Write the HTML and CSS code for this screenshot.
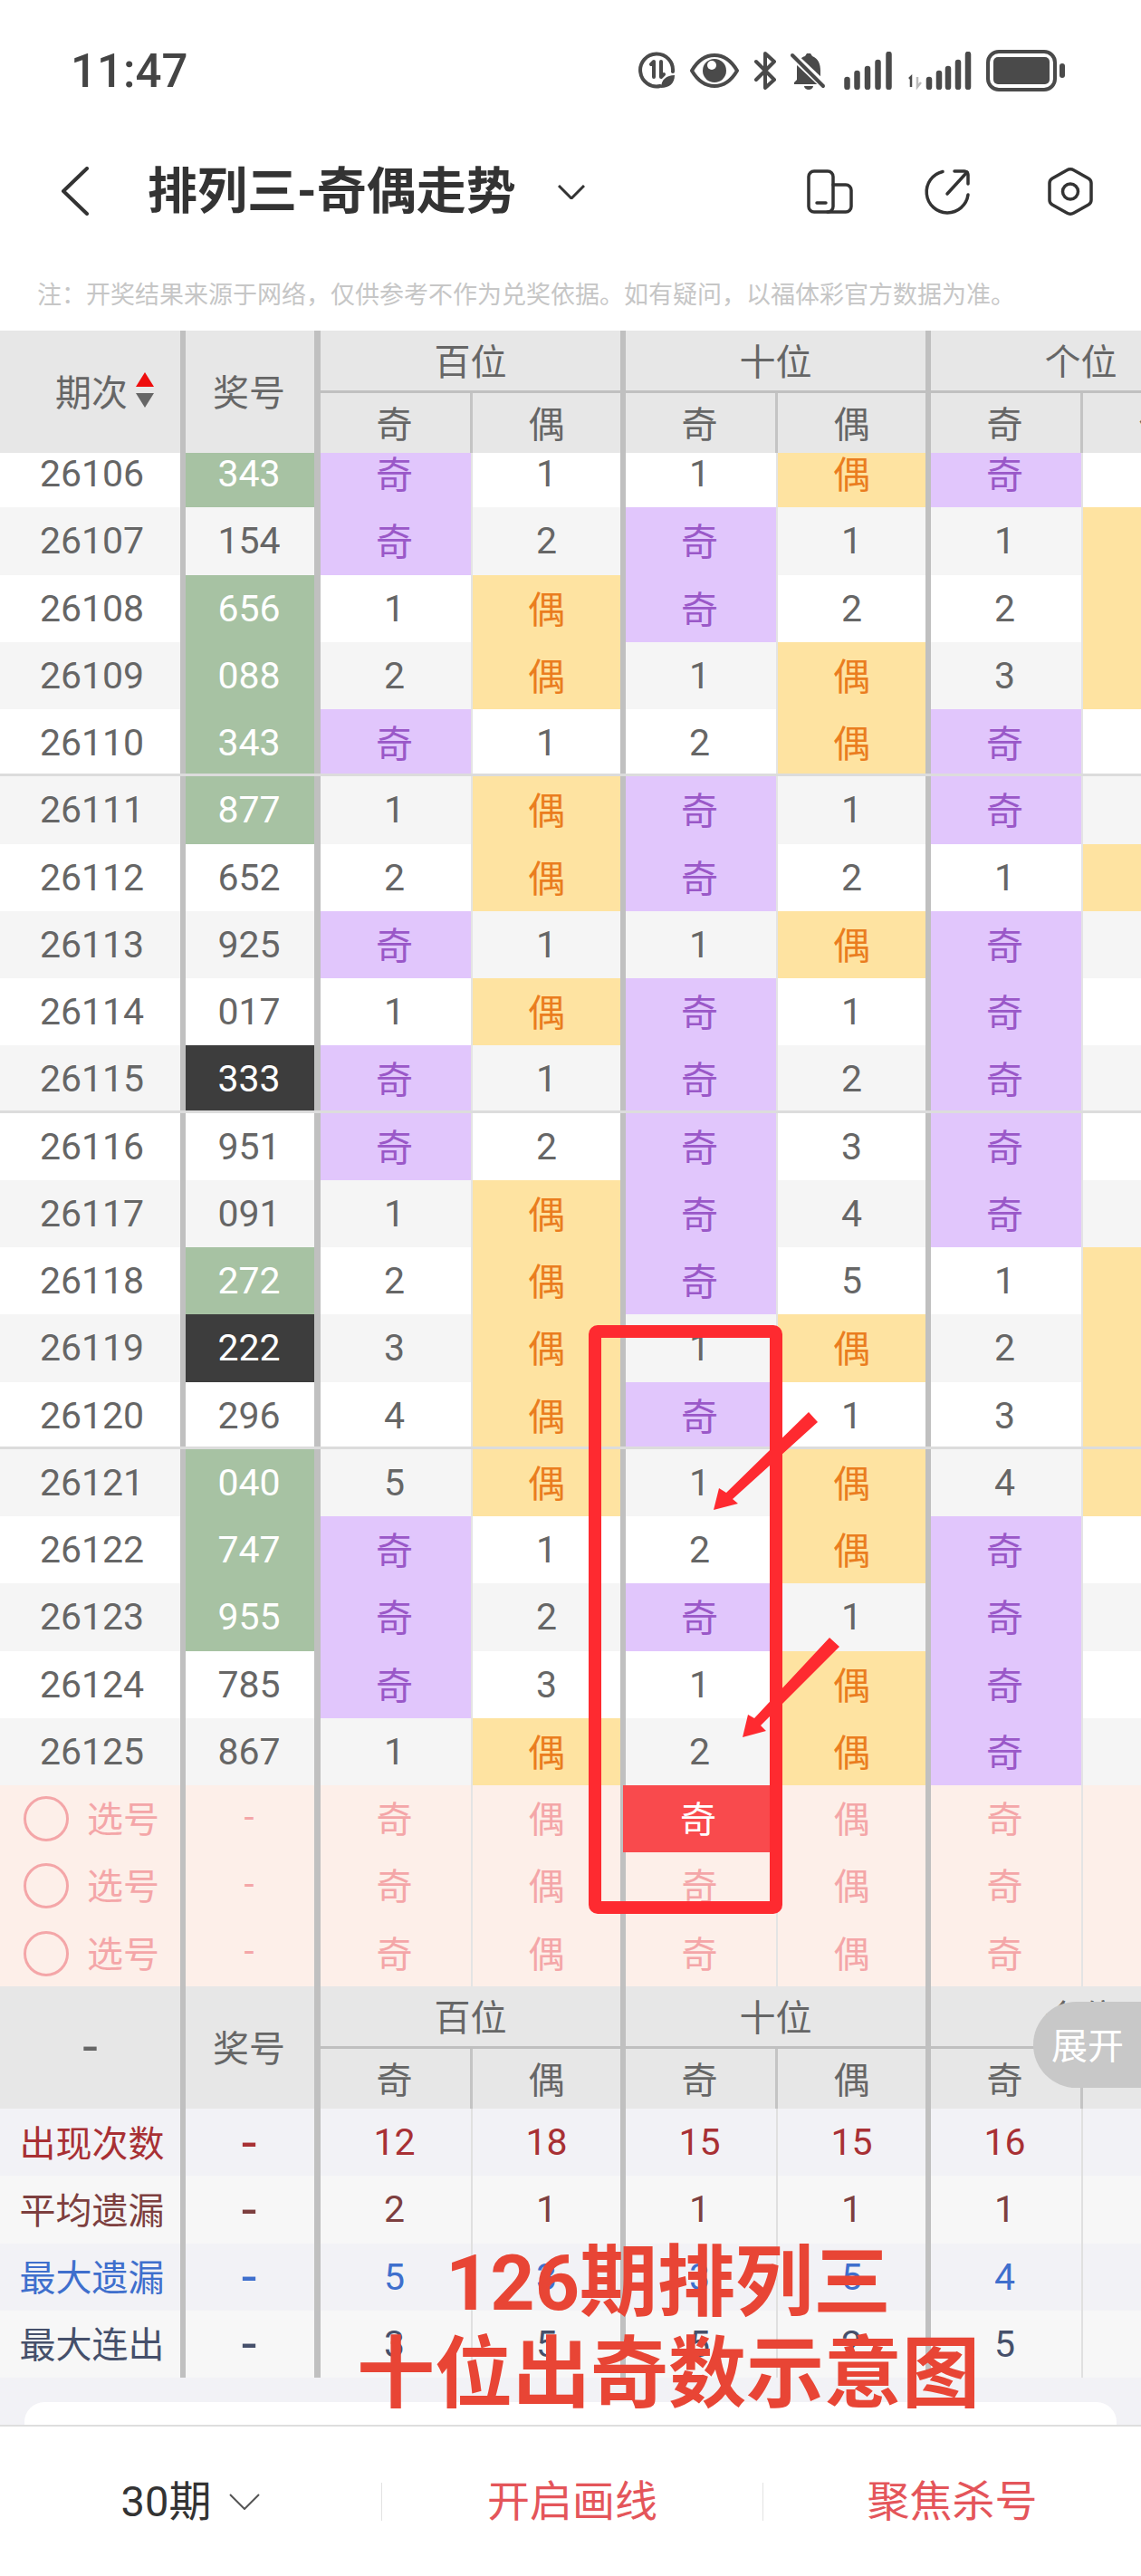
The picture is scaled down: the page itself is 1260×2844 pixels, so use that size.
FILE: index.html
```html
<!DOCTYPE html>
<html lang="zh">
<head>
<meta charset="utf-8">
<title>排列三-奇偶走势</title>
<link rel="stylesheet" href="styles.css">
</head>
<body>
<div class="page">
  <div class="status">
    <span class="time">11:47</span>
    <div class="status-icons">
      <svg width="41" height="42" viewBox="0 0 41 42"><path class="ln" d="M24 38A18 18 0 1 1 38 22"/><path class="ln" d="M14 14l3-3v17M25 11v17l3-3"/><path class="fl" d="M25 40c0-9 6-14 15-14 0 9-6 14-15 14z"/></svg>
      <svg width="54" height="42" viewBox="0 0 54 42"><path class="ln" d="M2 21C9 9 18 4 27 4s18 5 25 17c-7 12-16 17-25 17S9 33 2 21z"/><circle class="fl" cx="27" cy="21" r="13"/><circle class="wh" cx="24" cy="15" r="5"/></svg>
      <svg width="26" height="42" viewBox="0 0 26 42"><path class="ln" d="M3 11l20 20-10 9V2l10 9L3 31"/></svg>
      <svg class="bell" width="44" height="42" viewBox="0 0 44 42"><path class="fl" d="M19 2h4l2 3c7 3 9 9 9 16v10l3 3v2H5v-2l3-3V17c0-6 3-10 9-12z"/><path class="fl" d="M16 38h10a5 4 0 0 1-10 0z"/><path class="slash" d="M3 4l38 36"/><path class="slash-b" d="M3 4l34 34"/></svg>
      <svg width="53" height="42" viewBox="0 0 53 42"><g class="bar"><path d="M3.500 31v8"/><path d="M14.500 24v15"/><path d="M26 19v20"/><path d="M37.500 12v27"/><path d="M49.500 3v36"/></g></svg>
      <svg width="72" height="42" viewBox="0 0 72 42"><path class="tiny" d="M3 30l2-2v11"/><path class="tiny-g" d="M12 28v11l4-5"/><g class="bar"><path d="M25 31v8"/><path d="M36 24v15"/><path d="M46 19v20"/><path d="M57 12v27"/><path d="M68 3v36"/></g></svg>
      <svg width="87" height="46" viewBox="0 0 87 46"><rect class="ln" x="2" y="2" width="74" height="42" rx="12"/><rect class="fl" x="8" y="8" width="62" height="30" rx="5"/><rect class="fl" x="81" y="15" width="6" height="16" rx="3"/></svg>
    </div>
  </div>

  <div class="nav">
    <svg class="back" width="31" height="54" viewBox="0 0 31 54"><path d="M29 2L3 27l26 25"/></svg>
    <h1 class="title">排列三-奇偶走势</h1>
    <svg class="title-caret" width="30" height="16" viewBox="0 0 30 16"><path d="M1 1l14 14L29 1"/></svg>
    <svg class="nav-icon nav-device" width="51" height="49" viewBox="0 0 51 49"><path d="M23 2H8a6 6 0 0 0-6 6v33a6 6 0 0 0 6 6h15a6 6 0 0 0 6-6V8a6 6 0 0 0-6-6z"/><path d="M29 17h14a6 6 0 0 1 6 6v18a6 6 0 0 1-6 6H23"/><path d="M11 37h10"/></svg>
    <svg class="nav-icon nav-share" width="51" height="51" viewBox="0 0 51 51"><path d="M21 3.500A23 23 0 1 0 49 29"/><path d="M34 3h11a4 4 0 0 1 4 4v10"/><path d="M48 4L26 28"/></svg>
    <svg class="nav-icon nav-hex" width="50" height="53" viewBox="0 0 50 53"><path d="M21 3L5 12a6 6 0 0 0-3 5v19a6 6 0 0 0 3 5l16 9a8 8 0 0 0 8 0l16-9a6 6 0 0 0 3-5V17a6 6 0 0 0-3-5L29 3a8 8 0 0 0-8 0z"/><circle cx="25" cy="26.500" r="8.500"/></svg>
  </div>

  <p class="note">注：开奖结果来源于网络，仅供参考不作为兑奖依据。如有疑问，以福体彩官方数据为准。</p>

  <div class="thead">
    <div class="th th-no th-sort">期次<span class="sort"><i class="up"></i><i class="down"></i></span></div>
    <div class="th th-prize">奖号</div>
    <div class="th grp">百位</div><div class="th grp">十位</div><div class="th grp">个位</div>
    <div class="th sub">奇</div><div class="th sub sub-e">偶</div>
    <div class="th sub">奇</div><div class="th sub sub-e">偶</div>
    <div class="th sub">奇</div><div class="th sub sub-e">偶</div>
  </div>

  <div class="tbody">
    <div class="rows">
      <div class="row"><span>26106</span><span class="g">343</span><span class="o">奇</span><span>1</span><span>1</span><span class="e">偶</span><span class="o">奇</span><span>1</span></div>
      <div class="row"><span>26107</span><span>154</span><span class="o">奇</span><span>2</span><span class="o">奇</span><span>1</span><span>1</span><span class="e">偶</span></div>
      <div class="row"><span>26108</span><span class="g">656</span><span>1</span><span class="e">偶</span><span class="o">奇</span><span>2</span><span>2</span><span class="e">偶</span></div>
      <div class="row"><span>26109</span><span class="g">088</span><span>2</span><span class="e">偶</span><span>1</span><span class="e">偶</span><span>3</span><span class="e">偶</span></div>
      <div class="row line"><span>26110</span><span class="g">343</span><span class="o">奇</span><span>1</span><span>2</span><span class="e">偶</span><span class="o">奇</span><span>1</span></div>
      <div class="row"><span>26111</span><span class="g">877</span><span>1</span><span class="e">偶</span><span class="o">奇</span><span>1</span><span class="o">奇</span><span>2</span></div>
      <div class="row"><span>26112</span><span>652</span><span>2</span><span class="e">偶</span><span class="o">奇</span><span>2</span><span>1</span><span class="e">偶</span></div>
      <div class="row"><span>26113</span><span>925</span><span class="o">奇</span><span>1</span><span>1</span><span class="e">偶</span><span class="o">奇</span><span>1</span></div>
      <div class="row"><span>26114</span><span>017</span><span>1</span><span class="e">偶</span><span class="o">奇</span><span>1</span><span class="o">奇</span><span>2</span></div>
      <div class="row line"><span>26115</span><span class="k">333</span><span class="o">奇</span><span>1</span><span class="o">奇</span><span>2</span><span class="o">奇</span><span>3</span></div>
      <div class="row"><span>26116</span><span>951</span><span class="o">奇</span><span>2</span><span class="o">奇</span><span>3</span><span class="o">奇</span><span>4</span></div>
      <div class="row"><span>26117</span><span>091</span><span>1</span><span class="e">偶</span><span class="o">奇</span><span>4</span><span class="o">奇</span><span>5</span></div>
      <div class="row"><span>26118</span><span class="g">272</span><span>2</span><span class="e">偶</span><span class="o">奇</span><span>5</span><span>1</span><span class="e">偶</span></div>
      <div class="row"><span>26119</span><span class="k">222</span><span>3</span><span class="e">偶</span><span>1</span><span class="e">偶</span><span>2</span><span class="e">偶</span></div>
      <div class="row line"><span>26120</span><span>296</span><span>4</span><span class="e">偶</span><span class="o">奇</span><span>1</span><span>3</span><span class="e">偶</span></div>
      <div class="row"><span>26121</span><span class="g">040</span><span>5</span><span class="e">偶</span><span>1</span><span class="e">偶</span><span>4</span><span class="e">偶</span></div>
      <div class="row"><span>26122</span><span class="g">747</span><span class="o">奇</span><span>1</span><span>2</span><span class="e">偶</span><span class="o">奇</span><span>1</span></div>
      <div class="row"><span>26123</span><span class="g">955</span><span class="o">奇</span><span>2</span><span class="o">奇</span><span>1</span><span class="o">奇</span><span>2</span></div>
      <div class="row"><span>26124</span><span>785</span><span class="o">奇</span><span>3</span><span>1</span><span class="e">偶</span><span class="o">奇</span><span>3</span></div>
      <div class="row"><span>26125</span><span>867</span><span>1</span><span class="e">偶</span><span>2</span><span class="e">偶</span><span class="o">奇</span><span>4</span></div>
      <div class="row pick"><span><i class="radio"></i>选号</span><span class="d">-</span><span>奇</span><span>偶</span><span class="picked">奇</span><span>偶</span><span>奇</span><span>偶</span></div>
      <div class="row pick"><span><i class="radio"></i>选号</span><span class="d">-</span><span>奇</span><span>偶</span><span>奇</span><span>偶</span><span>奇</span><span>偶</span></div>
      <div class="row pick"><span><i class="radio"></i>选号</span><span class="d">-</span><span>奇</span><span>偶</span><span>奇</span><span>偶</span><span>奇</span><span>偶</span></div>
    </div>
  </div>

  <div class="thead">
    <div class="th th-no th-dash">-</div>
    <div class="th th-prize">奖号</div>
    <div class="th grp">百位</div><div class="th grp">十位</div><div class="th grp">个位</div>
    <div class="th sub">奇</div><div class="th sub sub-e">偶</div>
    <div class="th sub">奇</div><div class="th sub sub-e">偶</div>
    <div class="th sub">奇</div><div class="th sub sub-e">偶</div>
  </div>

  <div class="stats">
    <div class="row s-count"><span>出现次数</span><span class="d">-</span><span>12</span><span>18</span><span>15</span><span>15</span><span>16</span><span>14</span></div>
    <div class="row s-avg"><span>平均遗漏</span><span class="d">-</span><span>2</span><span>1</span><span>1</span><span>1</span><span>1</span><span>1</span></div>
    <div class="row s-max"><span>最大遗漏</span><span class="d">-</span><span>5</span><span>3</span><span>3</span><span>5</span><span>4</span><span>5</span></div>
    <div class="row s-run"><span>最大连出</span><span class="d">-</span><span>3</span><span>5</span><span>5</span><span>2</span><span>5</span><span>3</span></div>
  </div>

  <div class="foot-gap"><div class="foot-card"></div></div>

  <div class="bottom">
    <div class="bottom-cell bottom-period">30期<svg width="34" height="18" viewBox="0 0 34 18"><path d="M1 1l16 16L33 1"/></svg></div>
    <div class="bottom-cell bottom-red">开启画线</div>
    <div class="bottom-cell bottom-red">聚焦杀号</div>
  </div>

  <div class="expand">展开</div>

  <svg class="annot" width="1260" height="2844" viewBox="0 0 1260 2844">
    <rect class="annot-box" x="657" y="1470" width="200" height="636" rx="3"/>
    <polygon class="annot-arrow" points="893,1559 903,1570 809,1655 815,1660 788,1667 794,1643 802,1648"/>
    <polygon class="annot-arrow" points="916,1808 927,1818 840,1905 846,1911 820,1918 826,1893 833,1897"/>
  </svg>
  <div class="caption">126期排列三<br>十位出奇数示意图</div>
</div>
</body>
</html>
```
FILE: styles.css
```css
* { box-sizing: border-box; }
html, body { margin: 0; padding: 0; background: #fff; }
body { font-family: Roboto, "Noto Sans CJK SC", sans-serif; color: #666; }
.page { position: relative; width: 1260px; height: 2844px; overflow: hidden; display: flex; flex-direction: column; background: #fff; }

/* status bar */
.status { height: 156px; flex: none; display: flex; align-items: center; padding: 0 84px 0 78px; }
.time { font-size: 51px; font-weight: 500; color: #444; line-height: 1; }
.status-icons { margin-left: auto; display: flex; align-items: center; gap: 16px; }
.status-icons .bell { margin-left: -2px; }
.ln { fill: none; stroke: #4a4a4a; stroke-width: 4; stroke-linecap: round; stroke-linejoin: round; }
.fl { fill: #4a4a4a; }
.wh { fill: #fff; }
.slash { stroke: #fff; stroke-width: 9; fill: none; }
.slash-b { stroke: #4a4a4a; stroke-width: 4; stroke-linecap: round; fill: none; }
.bar path { stroke: #4a4a4a; stroke-width: 6.500; stroke-linecap: round; fill: none; }
.tiny { stroke: #4a4a4a; stroke-width: 2.500; fill: none; }
.tiny-g { stroke: #bbb; stroke-width: 2.500; fill: none; }

/* nav */
.nav { height: 110px; flex: none; display: flex; align-items: center; padding: 0 53px 0 67px; }
.back path { fill: none; stroke: #333; stroke-width: 4; stroke-linecap: round; stroke-linejoin: round; }
.title { margin: 0 0 0 65px; font-size: 55px; line-height: 1; font-weight: 700; color: #333; white-space: nowrap; }
.title-caret { margin-left: 46px; margin-top: 2px; }
.title-caret path { fill: none; stroke: #333; stroke-width: 3; }
.nav-icon path, .nav-icon circle { fill: none; stroke: #333; stroke-width: 3.500; stroke-linecap: round; stroke-linejoin: round; }
.nav-device { margin-left: auto; }
.nav-share { margin-left: 78px; }
.nav-hex { margin-left: 86px; }

.note { height: 99px; flex: none; margin: 0; padding: 40px 0 0 41px; font-size: 27px; line-height: 40px; color: #c6c6c6; white-space: nowrap; }

/* table */
.thead, .row { display: grid; grid-template-columns: 205px 149px 168px 169px 168px 169px 168px 169px; width: 1365px; }
.thead { flex: none; height: 135px; grid-template-rows: 69px 66px; background: #e7e7e7; }
.th { display: flex; align-items: center; justify-content: center; font-size: 40px; color: #666; padding-bottom: 2px; }
.th-no { grid-row: 1 / 3; border-right: 6px solid #c0c0c0; }
.th-sort { padding-left: 32px; padding-bottom: 4px; }
.th-dash { font-size: 60px; }
.th-prize { grid-row: 1 / 3; border-right: 7px solid #c0c0c0; padding-bottom: 4px; padding-right: 2px; }
.grp { grid-column: span 2; border-right: 6px solid #c0c0c0; border-bottom: 3px solid #c0c0c0; }
.sub { border-right: 3px solid #c4c4c4; padding-right: 2px; }
.sub-e { border-right: 6px solid #c0c0c0; padding-right: 0; }
.sort { display: flex; flex-direction: column; gap: 7px; margin-left: 9px; }
.up { width: 0; height: 0; border: 10px solid transparent; border-top: 0; border-bottom: 16px solid #ee0d0d; }
.down { width: 0; height: 0; border: 10px solid transparent; border-bottom: 0; border-top: 16px solid #666; }

.tbody { flex: none; height: 1693px; overflow: hidden; }
.rows { margin-top: -14px; }
.row { height: 74.260px; background: #fff; }
.rows .row:nth-child(even) { background: #f5f5f5; }
.row > span { display: flex; align-items: center; justify-content: center; font-size: 41px; color: #666; }
.row > span:nth-child(1) { border-right: 6px solid #c0c0c0; padding-left: 4px; }
.row > span:nth-child(2) { border-right: 7px solid #c0c0c0; padding-right: 2px; }
.row > span:nth-child(2n+3) { border-right: 2px solid #e4e4e4; padding-right: 3px; }
.row > span:nth-child(2n+4) { border-right: 6px solid #c0c0c0; }
.row > span:nth-child(8) { border-right: 0; }
.row.line { border-bottom: 3px solid #dcdcdc; }
.row.line > span { padding-top: 3px; }
.row > .o { background: #e1c6fc; color: #9a58c8; background-clip: padding-box; padding-bottom: 4px; }
.row > .e { background: #fee3a1; color: #ea7d1f; background-clip: padding-box; padding-bottom: 4px; }
.row > .g { background: #a7c2a3; color: #fff; background-clip: padding-box; }
.row > .k { background: #3d3d3d; color: #fff; background-clip: padding-box; }
.rows .row.pick { background: #fdefe9; }
.row.pick > span { color: #f4a6a8; font-size: 40px; padding-bottom: 4px; }
.row.pick > span:first-child { justify-content: flex-start; padding-left: 26px; gap: 20px; }
.radio { width: 50px; height: 50px; border: 3px solid #f4a6a8; border-radius: 50%; margin-top: 4px; }
.row.pick > .picked { background: #f94a4d; color: #fff; margin-left: -3px; background-clip: padding-box; }
.row > .d, .stats .row > .d { font-size: 60px; padding-bottom: 0; }

.stats { flex: none; }
.stats .row > span { font-size: 41px; }
.stats .row > span:first-child { font-size: 40px; padding-bottom: 3px; }
.stats .row > span:nth-child(n+3):nth-child(odd) { border-right-color: #e0e0e0; }
.s-count { background: #f2f2f6; }
.s-avg { background: #f7f7f7; }
.s-max { background: #f2f2f6; }
.s-run { background: #f7f7f7; }
.s-count > span { color: #a83034 !important; }
.s-avg > span { color: #7d3f3f !important; }
.s-max > span { color: #3f6fcd !important; }
.s-run > span { color: #46506b !important; }

.foot-gap { flex: 1; min-height: 0; background: #f2f2f6; padding: 27px 27px 0; overflow: hidden; }
.foot-card { height: 60px; background: #fff; border-radius: 22px 22px 0 0; }

.bottom { flex: none; height: 167px; border-top: 2px solid #dedede; background: #fff; display: grid; grid-template-columns: 421px 421px 418px; align-items: center; }
.bottom-cell { height: 42px; line-height: 42px; font-size: 47px; display: flex; align-items: center; justify-content: center; white-space: nowrap; }
.bottom-cell + .bottom-cell { border-left: 1px solid #e2e2e2; }
.bottom-period { color: #333; gap: 20px; }
.bottom-period svg path { fill: none; stroke: #555; stroke-width: 2; }
.bottom-red { color: #e4555a; }

/* overlays */
.expand { position: absolute; right: 0; top: 2210px; width: 119px; height: 95px; background: #c8c8c8; color: #fff; font-size: 40px; border-radius: 48px 0 0 48px; display: flex; align-items: center; padding-left: 20px; padding-bottom: 3px; }
.annot { position: absolute; left: 0; top: 0; pointer-events: none; }
.annot-box { fill: none; stroke: #fe2a30; stroke-width: 14; }
.annot-arrow { fill: #fe2a30; }
.caption { position: absolute; left: 338px; top: 2470px; width: 800px; text-align: center; font-size: 86px; line-height: 101px; font-weight: 700; color: #e84535; white-space: nowrap; }
```
